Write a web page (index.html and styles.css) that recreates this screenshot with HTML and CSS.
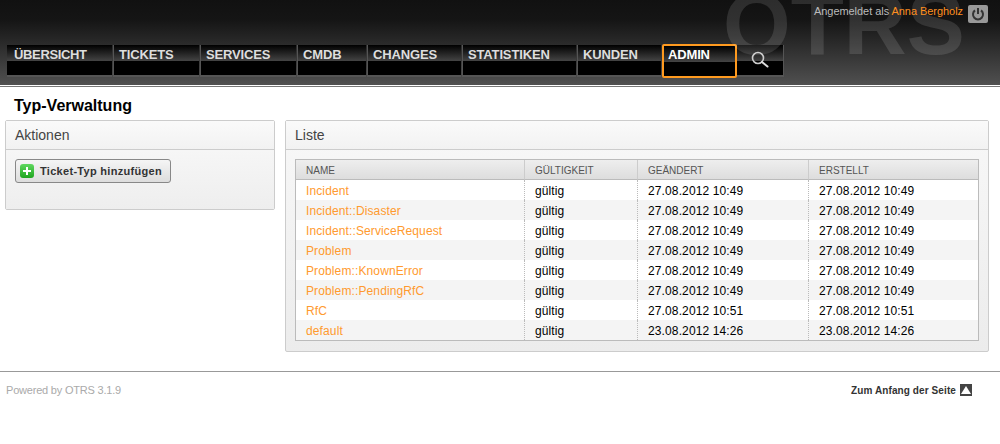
FILE: index.html
```html
<!DOCTYPE html>
<html lang="de">
<head>
    <meta charset="UTF-8">
    <title>Typ-Verwaltung</title>
    <link rel="stylesheet" href="styles.css">
</head>
<body>
    <header class="header">
        <div class="watermark">OTRS</div>
        <div class="login">
            <span>Angemeldet als <a href="#" class="user">Anna Bergholz</a></span>
            <a href="#" class="logout">
                <svg width="14" height="14" viewBox="0 0 14 14" fill="none" stroke="#333" stroke-width="2">
                    <path d="M4 3.4a5 5 0 1 0 6 0"/>
                    <path d="M7 1v6"/>
                </svg>
            </a>
        </div>
        <nav class="nav">
            <a href="#" class="nav-item w1">ÜBERSICHT</a>
            <a href="#" class="nav-item w2">TICKETS</a>
            <a href="#" class="nav-item w3">SERVICES</a>
            <a href="#" class="nav-item w4">CMDB</a>
            <a href="#" class="nav-item w5">CHANGES</a>
            <a href="#" class="nav-item w6">STATISTIKEN</a>
            <a href="#" class="nav-item w7">KUNDEN</a>
            <a href="#" class="nav-item w8 selected">ADMIN</a>
            <a href="#" class="nav-item w9 search">
                <svg width="20" height="20" viewBox="0 0 20 20" fill="none" stroke-linecap="round">
                    <circle cx="8" cy="8" r="5.5" stroke="#ccc" stroke-width="1.6"/>
                    <path d="M12 12l5.500 4.500" stroke="#ddd" stroke-width="2"/>
                </svg>
            </a>
        </nav>
    </header>

    <h1 class="title">Typ-Verwaltung</h1>

    <main class="content">
        <section class="panel sidebar">
            <h2 class="panel-head">Aktionen</h2>
            <div class="panel-body actions">
                <a href="#" class="button">
                    <span class="plus"></span>
                    Ticket-Typ hinzufügen
                </a>
            </div>
        </section>

        <section class="panel main">
            <h2 class="panel-head">Liste</h2>
            <div class="panel-body">
                <table class="list">
                    <thead>
                        <tr>
                            <th class="col-name">NAME</th>
                            <th class="col-valid">GÜLTIGKEIT</th>
                            <th class="col-changed">GEÄNDERT</th>
                            <th>ERSTELLT</th>
                        </tr>
                    </thead>
                    <tbody>
                        <tr><td><a href="#">Incident</a></td><td>gültig</td><td>27.08.2012 10:49</td><td>27.08.2012 10:49</td></tr>
                        <tr><td><a href="#">Incident::Disaster</a></td><td>gültig</td><td>27.08.2012 10:49</td><td>27.08.2012 10:49</td></tr>
                        <tr><td><a href="#">Incident::ServiceRequest</a></td><td>gültig</td><td>27.08.2012 10:49</td><td>27.08.2012 10:49</td></tr>
                        <tr><td><a href="#">Problem</a></td><td>gültig</td><td>27.08.2012 10:49</td><td>27.08.2012 10:49</td></tr>
                        <tr><td><a href="#">Problem::KnownError</a></td><td>gültig</td><td>27.08.2012 10:49</td><td>27.08.2012 10:49</td></tr>
                        <tr><td><a href="#">Problem::PendingRfC</a></td><td>gültig</td><td>27.08.2012 10:49</td><td>27.08.2012 10:49</td></tr>
                        <tr><td><a href="#">RfC</a></td><td>gültig</td><td>27.08.2012 10:51</td><td>27.08.2012 10:51</td></tr>
                        <tr><td><a href="#">default</a></td><td>gültig</td><td>23.08.2012 14:26</td><td>23.08.2012 14:26</td></tr>
                    </tbody>
                </table>
            </div>
        </section>
    </main>

    <footer class="footer">
        <span class="powered">Powered by OTRS 3.1.9</span>
        <a href="#" class="top-link">Zum Anfang der Seite <span class="top-icon"></span></a>
    </footer>
</body>
</html>
```

FILE: styles.css
```css
* {
    box-sizing: border-box;
}

body {
    margin: 0;
    background-color: #fff;
    font-family: "Liberation Sans", Arial, sans-serif;
    font-size: 12px;
    color: #000;
}

a {
    text-decoration: none;
}

/* Header */
.header {
    position: relative;
    height: 87px;
    padding: 45px 0 0 7px;
    overflow: hidden;
    background: linear-gradient(#111 0, #151515 20px, #505050 85px);
    border-bottom: 1px solid #777;
    box-shadow: inset 0 -1px 0 #fff;
}

.watermark {
    position: absolute;
    top: -20px;
    left: 723px;
    font-size: 87px;
    line-height: 87px;
    font-weight: bold;
    color: rgba(255, 255, 255, 0.12);
}

.login {
    position: absolute;
    top: 5px;
    right: 12px;
    display: flex;
    align-items: flex-start;
    gap: 5px;
    font-size: 11px;
    line-height: 13px;
    letter-spacing: -0.05px;
    color: #bbb;
}

.user {
    color: #ff9020;
}

.logout {
    display: flex;
    align-items: center;
    justify-content: center;
    width: 20px;
    height: 18px;
    background-color: #999;
    border-radius: 2px;
}

.nav {
    display: flex;
    height: 32px;
}

.nav-item {
    height: 32px;
    margin-right: 1px;
    padding: 2px 0 0 5px;
    background: linear-gradient(#000 0, #444 16px, #000 16px);
    border-bottom: 2px solid #555;
    border-left: 1px solid #555;
    font-size: 13px;
    line-height: 15px;
    font-weight: bold;
    letter-spacing: -0.15px;
    color: #ddd;
}

.nav-item:first-child {
    border-left: none;
    padding-left: 7px;
    letter-spacing: -0.35px;
}

.w1 { width: 105px; }
.w2 { width: 86px; }
.w3 { width: 96px; }
.w4 { width: 69px; }
.w5 { width: 94px; }
.w6 { width: 114px; }
.w7 { width: 84px; }
.w8 { width: 75px; }
.w9 { width: 47px; }

.nav-item.selected {
    height: 34px;
    margin-top: -1px;
    margin-right: 0;
    padding: 1px 0 0 4px;
    border: 2px solid #ff9a1f;
    border-radius: 2px;
    color: #fff;
}

.nav-item.search {
    display: flex;
    justify-content: center;
    padding: 5px 0 0 0;
    border-left: none;
    border-right: 1px solid #555;
}

/* Content */
.title {
    margin: 0;
    padding: 9px 0 0 14px;
    height: 33px;
    font-size: 16px;
    line-height: 19px;
    font-weight: bold;
}

.content {
    display: flex;
    align-items: flex-start;
    padding-left: 5px;
    gap: 10px;
}

.panel {
    border: 1px solid #ccc;
    border-radius: 2px;
    background: linear-gradient(#f8f8f8, #ececec);
}

.sidebar {
    width: 270px;
    height: 90px;
}

.main {
    width: 704px;
    height: 232px;
}

.panel-head {
    margin: 0;
    height: 29px;
    padding: 0 9px;
    background: linear-gradient(#fafafa, #f2f2f2);
    border-bottom: 1px solid #ccc;
    font-size: 14px;
    line-height: 28px;
    font-weight: normal;
    color: #444;
}

.panel-body {
    padding: 9px;
}

.actions {
    background: linear-gradient(#f6f6f6, #eee);
    height: 59px;
}

.button {
    display: inline-flex;
    align-items: center;
    gap: 6px;
    width: 156px;
    height: 24px;
    padding-left: 4px;
    background: linear-gradient(#f5f5f5, #ddd);
    border: 1px solid #888;
    border-radius: 3px;
    font-size: 11px;
    font-weight: bold;
    letter-spacing: 0.3px;
    color: #333;
}

.plus {
    position: relative;
    width: 14px;
    height: 14px;
    background: linear-gradient(#5fd85f, #1fa51f);
    border-radius: 3px;
}

.plus::before {
    content: "";
    position: absolute;
    left: 3px;
    top: 6px;
    width: 8px;
    height: 2px;
    background-color: #fff;
}

.plus::after {
    content: "";
    position: absolute;
    left: 6px;
    top: 3px;
    width: 2px;
    height: 8px;
    background-color: #fff;
}

/* Table */
.list {
    width: 684px;
    border: 1px solid #bbb;
    border-collapse: separate;
    border-spacing: 0;
    table-layout: fixed;
}

.list th {
    height: 20px;
    padding: 1px 0 0 10px;
    background: linear-gradient(#eee, #ddd);
    border-right: 1px solid #ccc;
    border-bottom: 1px solid #bbb;
    font-size: 10px;
    font-weight: normal;
    text-align: left;
    color: #555;
}

.list th:last-child,
.list td:last-child {
    border-right: none;
}

.col-name { width: 229px; }
.col-valid { width: 113px; }
.col-changed { width: 171px; }

.list td {
    height: 20px;
    padding: 1px 0 0 10px;
    border-right: 1px dotted #bbb;
    background-color: #fff;
    letter-spacing: 0.12px;
}

.list tr:nth-child(even) td {
    background-color: #f4f4f4;
}

.list td a {
    color: #ff9a2e;
}

/* Footer */
.footer {
    display: flex;
    justify-content: space-between;
    align-items: center;
    height: 37px;
    margin-top: 19px;
    padding: 0 28px 0 6px;
    border-top: 1px solid #999;
}

.powered {
    font-size: 11px;
    letter-spacing: -0.2px;
    color: #aaa;
}

.top-link {
    display: flex;
    align-items: center;
    gap: 4px;
    font-size: 10px;
    font-weight: bold;
    letter-spacing: 0.1px;
    color: #333;
}

.top-icon {
    position: relative;
    width: 12px;
    height: 12px;
    background-color: #444;
}

.top-icon::after {
    content: "";
    position: absolute;
    left: 1px;
    top: 2px;
    border-left: 5px solid transparent;
    border-right: 5px solid transparent;
    border-bottom: 8px solid #fff;
}
```
